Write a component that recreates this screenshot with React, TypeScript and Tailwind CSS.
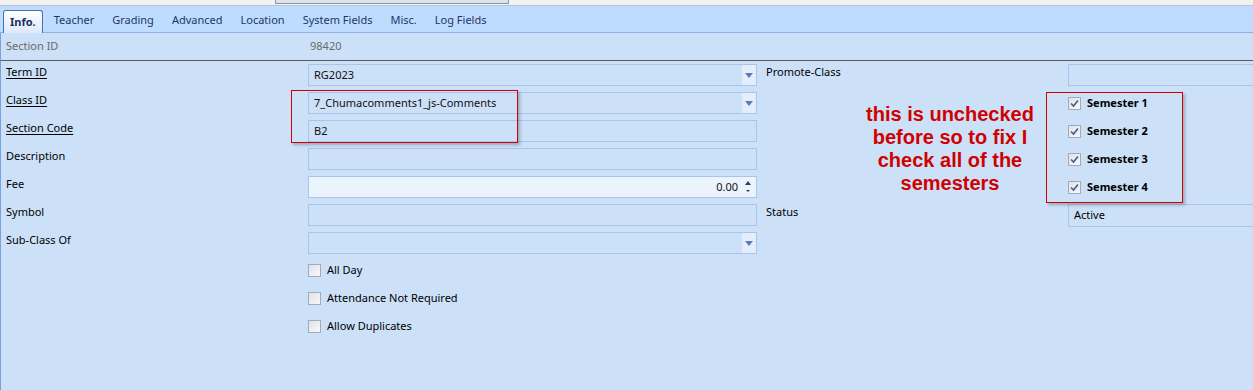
import React from "react";

const tabs = ["Info.", "Teacher", "Grading", "Advanced", "Location", "System Fields", "Misc.", "Log Fields"];

function DropArrow() {
  return (
    <div className="w-[14px] h-full bg-[#e4eefb] flex items-center justify-center">
      <svg width="8" height="5" viewBox="0 0 8 5">
        <path d="M0 0 L8 0 L4 5 Z" fill="#5c7cb4" />
      </svg>
    </div>
  );
}

function Field({ value = "", drop = false, light = false, right = false, spin = false }: {
  value?: string; drop?: boolean; light?: boolean; right?: boolean; spin?: boolean;
}) {
  return (
    <div className={`relative shrink-0 h-[22px] w-[449px] border border-[#a9c5ee] flex items-center ${light ? "bg-[#ebf3fd]" : "bg-[#cce0f8]"}`}>
      <span className={`flex-1 px-[5px] text-[11px] text-[#111] ${right ? "text-right pr-[18px]" : ""}`}>{value}</span>
      {drop && <DropArrow />}
      {spin && (
        <div className="absolute right-[5px] top-[4px] flex flex-col items-center gap-[5px]">
          <svg width="6" height="4" viewBox="0 0 6 4"><path d="M0 4 L6 4 L3 0 Z" fill="#2c3e60" /></svg>
          <svg width="4" height="2" viewBox="0 0 4 2"><path d="M0 0 L4 0 L2 2 Z" fill="#2c3e60" /></svg>
        </div>
      )}
    </div>
  );
}

function Check({ checked = false, label, bold = false }: { checked?: boolean; label: string; bold?: boolean }) {
  return (
    <div className="flex items-center gap-[6px] shrink-0">
      <div className="w-[13px] h-[13px] border border-[#a3abbb] bg-gradient-to-br from-[#dfe3ea] to-[#f6f7f9] flex items-center justify-center">
        {checked && (
          <svg width="9" height="9" viewBox="0 0 9 9">
            <path d="M1 4.5 L3.5 7 L8 1.5" stroke="#4a5d85" strokeWidth="1.6" fill="none" />
          </svg>
        )}
      </div>
      <span className={`text-[11px] text-black ${bold ? "font-bold" : ""}`}>{label}</span>
    </div>
  );
}

function Label({ text, u = false }: { text: string; u?: boolean }) {
  return <div className={`shrink-0 w-[307px] pl-[5px] text-[11px] leading-[16px] text-black ${u ? "underline underline-offset-2" : ""}`}>{text}</div>;
}

function RightLabel({ text = "" }: { text?: string }) {
  return <div className="shrink-0 w-[311px] pl-[9px] text-[11px] leading-[16px] text-black">{text}</div>;
}

export default function App() {
  return (
    <div className="relative w-[1253px] h-[390px] overflow-hidden bg-[#cce0f8]" style={{ fontFamily: '"Noto Sans", "DejaVu Sans", sans-serif' }}>
      {/* top strip */}
      <div className="h-[6px] bg-[#f2f2f2] border-b border-[#bcc3ce]">
        <div className="ml-[275px] w-[234px] h-[4px] border-x border-b border-[#8795ad] bg-[#dfe3ea]" />
      </div>

      {/* tabs */}
      <div className="h-[27px] bg-[#bedcff] border-b border-[#8fb2e6] flex items-end pl-[3px]">
        {tabs.map((t, i) =>
          i === 0 ? (
            <div key={t} className="h-[23px] -mb-px px-[6px] mr-[2px] flex items-center rounded-t-[3px] border border-b-0 border-[#4d6fa8] bg-gradient-to-b from-[#ffffff] to-[#dce9fa] text-[11px] font-bold text-[#1b2f5a]">
              {t}
            </div>
          ) : (
            <div key={t} className="h-[23px] px-[9px] flex items-center text-[11px] text-[#1e3566]">
              {t}
            </div>
          )
        )}
      </div>

      {/* section id row */}
      <div className="h-[28px] flex items-center border-b border-[#5a5a5a] border-l border-l-[#7aa0e0]">
        <div className="w-[307px] pl-[5px] text-[11px] text-[#6a6a6a]">Section ID</div>
        <div className="text-[11px] text-[#6a6a6a] pl-[2px]">98420</div>
      </div>

      {/* form */}
      <div className="border-l border-[#7aa0e0] h-full flex flex-col pt-[3px]">
        <div className="h-[28px] flex items-start">
          <Label text="Term ID" u />
          <Field value="RG2023" drop />
          <RightLabel text="Promote-Class" />
          <div className="shrink-0 h-[22px] w-[200px] border border-[#a9c5ee]" />
        </div>
        <div className="h-[28px] flex items-start">
          <Label text="Class ID" u />
          <Field value="7_Chumacomments1_js-Comments" drop />
          <RightLabel />
          <div className="pt-[3px]"><Check checked bold label="Semester 1" /></div>
        </div>
        <div className="h-[28px] flex items-start">
          <Label text="Section Code" u />
          <Field value="B2" />
          <RightLabel />
          <div className="pt-[3px]"><Check checked bold label="Semester 2" /></div>
        </div>
        <div className="h-[28px] flex items-start">
          <Label text="Description" />
          <Field />
          <RightLabel />
          <div className="pt-[3px]"><Check checked bold label="Semester 3" /></div>
        </div>
        <div className="h-[28px] flex items-start">
          <Label text="Fee" />
          <Field value="0.00" light right spin />
          <RightLabel />
          <div className="pt-[3px]"><Check checked bold label="Semester 4" /></div>
        </div>
        <div className="h-[28px] flex items-start">
          <Label text="Symbol" />
          <Field />
          <RightLabel text="Status" />
          <div className="shrink-0 h-[23px] w-[200px] border border-[#a9c5ee] flex items-center px-[5px] text-[11px] text-black">Active</div>
        </div>
        <div className="h-[28px] flex items-start">
          <Label text="Sub-Class Of" />
          <Field drop />
        </div>
        <div className="h-[28px] flex items-start pt-[2px] pl-[307px]"><Check label="All Day" /></div>
        <div className="h-[28px] flex items-start pt-[2px] pl-[307px]"><Check label="Attendance Not Required" /></div>
        <div className="h-[28px] flex items-start pt-[2px] pl-[307px]"><Check label="Allow Duplicates" /></div>
      </div>

      {/* annotations */}
      <div className="absolute left-[291px] top-[90px] w-[227px] h-[53px] border border-[#d40000] shadow-[2px_2px_3px_rgba(0,0,0,0.25)]" />
      <div className="absolute left-[1046px] top-[92px] w-[137px] h-[111px] border border-[#d40000] shadow-[2px_2px_3px_rgba(0,0,0,0.25)]" />
      <div
        className="absolute left-[840px] top-[103px] w-[220px] text-center text-[20px] leading-[23px] font-bold text-[#d00000]"
        style={{ fontFamily: '"Liberation Sans", Arial, sans-serif' }}
      >
        this is unchecked<br />before so to fix I<br />check all of the<br />semesters
      </div>
    </div>
  );
}
